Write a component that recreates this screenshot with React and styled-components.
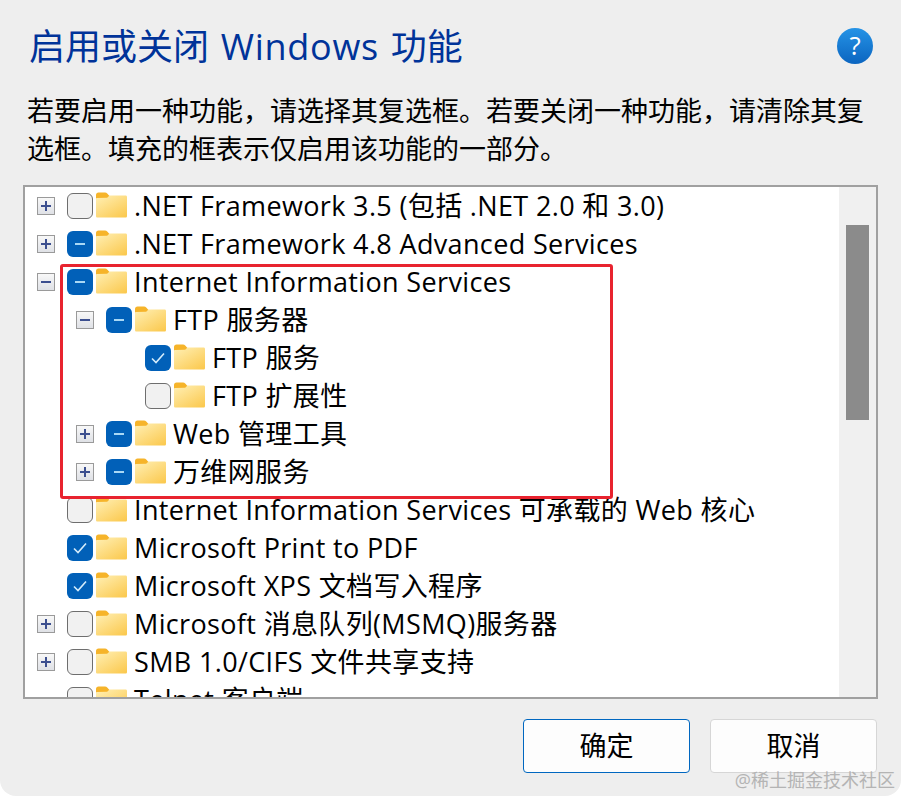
import React from "react";
import styled, { createGlobalStyle } from "styled-components";

const FONT = `"Open Sans", "Noto Sans CJK SC", sans-serif`;

const GlobalStyle = createGlobalStyle`
  html, body {
    margin: 0;
    padding: 0;
    background: #fff;
  }
  * {
    box-sizing: border-box;
  }
`;

const Dialog = styled.div`
  position: relative;
  width: 901px;
  height: 796px;
  background: #eeeeee;
  border-radius: 0 0 16px 16px;
  overflow: hidden;
  font-family: ${FONT};
  color: #000;
  padding: 0 23px 0 23px;
  display: flex;
  flex-direction: column;
`;

const Header = styled.div`
  height: 92px;
  display: flex;
  align-items: center;
  justify-content: space-between;
  padding: 0 5px 0 6px;
`;

const Title = styled.h1`
  margin: 2px 0 0 0;
  font-size: 36px;
  font-weight: 400;
  line-height: 48px;
  color: #003399;
  word-spacing: 2.5px;
`;

const TitleLatin = styled.span`
  letter-spacing: 0.7px;
`;

const HelpButton = styled.div`
  width: 36px;
  height: 36px;
  border-radius: 50%;
  background: linear-gradient(180deg, #2593e6, #0b65c0);
  color: #fff;
  font-size: 26px;
  line-height: 35px;
  text-align: center;
`;

const Description = styled.p`
  margin: 0 0 17px 0;
  padding-left: 4px;
  font-size: 27px;
  line-height: 38px;
  height: 76px;
  white-space: nowrap;
`;

const ListBox = styled.div`
  height: 514px;
  width: 855px;
  border: 2px solid #a0a0a0;
  background: #fff;
  display: flex;
  overflow: hidden;
`;

const Rows = styled.div`
  flex: 1;
  overflow: hidden;
`;

const Row = styled.div`
  height: 38px;
  display: flex;
  align-items: center;
  padding-left: ${(p) => 12 + p.$level * 39}px;
  font-size: 27px;
  letter-spacing: 0.35px;
  white-space: nowrap;
`;

const ExpanderSlot = styled.div`
  width: 30px;
  flex-shrink: 0;
`;

const Expander = styled.div`
  position: relative;
  width: 18px;
  height: 18px;
  border: 1px solid #9a9a9a;
  background: linear-gradient(180deg, #f8f8f8, #dfe1e6);
  &::before {
    content: "";
    position: absolute;
    left: 3px;
    top: 7px;
    width: 10px;
    height: 2px;
    background: #3c4f8f;
  }
  &::after {
    content: "";
    display: ${(p) => (p.$open ? "none" : "block")};
    position: absolute;
    left: 7px;
    top: 3px;
    width: 2px;
    height: 10px;
    background: #3c4f8f;
  }
`;

const Check = styled.div`
  width: 26px;
  height: 26px;
  flex-shrink: 0;
  border-radius: 6px;
  display: flex;
  align-items: center;
  justify-content: center;
  background: ${(p) => (p.$state === "off" ? "#f1f1f1" : "#0160b8")};
  border: ${(p) => (p.$state === "off" ? "1px solid #6e6e6e" : "none")};
`;

const Dash = styled.div`
  width: 10px;
  height: 2px;
  background: #a9d8f5;
`;

const Label = styled.span`
  margin-left: 6px;
  line-height: 38px;
`;

const Scrollbar = styled.div`
  width: 37px;
  background: #f0f0f0;
  padding: 38px 7px 0 7px;
  flex-shrink: 0;
`;

const Thumb = styled.div`
  height: 195px;
  background: #8b8b8b;
`;

const Footer = styled.div`
  flex: 1;
  display: flex;
  justify-content: flex-end;
  gap: 20px;
  padding: 20px 1px 0 0;
`;

const Button = styled.div`
  width: 167px;
  height: 54px;
  border-radius: 4px;
  background: #fdfdfd;
  border: 1px solid ${(p) => (p.$primary ? "#0067c0" : "#d6d6d6")};
  font-size: 27px;
  line-height: 52px;
  text-align: center;
`;

const Highlight = styled.div`
  position: absolute;
  left: 60px;
  top: 264px;
  width: 553px;
  height: 235px;
  border: 3px solid #e8232f;
  border-radius: 3px;
  pointer-events: none;
`;

const Watermark = styled.div`
  position: absolute;
  right: 6px;
  bottom: 5px;
  font-size: 18px;
  line-height: 22px;
  color: #b4b4b4;
`;

const FolderSvg = styled.svg`
  width: 33px;
  height: 26px;
  flex-shrink: 0;
  margin: -3px 0 0 2px;
`;

function Folder({ id }) {
  return (
    <FolderSvg viewBox="0 0 33 26">
      <defs>
        <linearGradient id={id} x1="0.1" y1="0" x2="0.9" y2="1">
          <stop offset="0" stopColor="#ffeeb0" />
          <stop offset="1" stopColor="#fbc94f" />
        </linearGradient>
      </defs>
      <path d="M1 3C1 1.6 2 .6 3.5 .6H10c1 0 1.6.4 2.2 1L14.5 4v4H1z" fill="#f6b42a" />
      <path d="M1 7c0-.6.4-1 1-1l10.2-.2L14.5 3.5H30.5c1 0 1.5.6 1.5 1.5v19c0 1-.6 1.5-1.5 1.5H2.5C1.6 25.5 1 25 1 24z" fill={`url(#${id})`} />
    </FolderSvg>
  );
}

function CheckBox({ state }) {
  return (
    <Check $state={state}>
      {state === "mixed" && <Dash />}
      {state === "on" && (
        <svg width="16" height="14" viewBox="0 0 16 14" fill="none">
          <path d="M2 7.5L6 11.5L14 2.5" stroke="#d4ecfb" strokeWidth="1.6" />
        </svg>
      )}
    </Check>
  );
}

const rows = [
  { level: 0, exp: "closed", state: "off", text: ".NET Framework 3.5 (包括 .NET 2.0 和 3.0)" },
  { level: 0, exp: "closed", state: "mixed", text: ".NET Framework 4.8 Advanced Services" },
  { level: 0, exp: "open", state: "mixed", text: "Internet Information Services" },
  { level: 1, exp: "open", state: "mixed", text: "FTP 服务器" },
  { level: 2, state: "on", text: "FTP 服务" },
  { level: 2, state: "off", text: "FTP 扩展性" },
  { level: 1, exp: "closed", state: "mixed", text: "Web 管理工具" },
  { level: 1, exp: "closed", state: "mixed", text: "万维网服务" },
  { level: 0, state: "off", text: "Internet Information Services 可承载的 Web 核心" },
  { level: 0, state: "on", text: "Microsoft Print to PDF" },
  { level: 0, state: "on", text: "Microsoft XPS 文档写入程序" },
  { level: 0, exp: "closed", state: "off", text: "Microsoft 消息队列(MSMQ)服务器" },
  { level: 0, exp: "closed", state: "off", text: "SMB 1.0/CIFS 文件共享支持" },
  { level: 0, state: "off", text: "Telnet 客户端" },
];

function App() {
  return (
    <Dialog>
      <GlobalStyle />
      <Header>
        <Title>
          启用或关闭 <TitleLatin>Windows</TitleLatin> 功能
        </Title>
        <HelpButton>?</HelpButton>
      </Header>
      <Description>
        若要启用一种功能，请选择其复选框。若要关闭一种功能，请清除其复
        <br />
        选框。填充的框表示仅启用该功能的一部分。
      </Description>
      <ListBox>
        <Rows>
          {rows.map((r, i) => (
            <Row key={i} $level={r.level}>
              <ExpanderSlot>{r.exp && <Expander $open={r.exp === "open"} />}</ExpanderSlot>
              <CheckBox state={r.state} />
              <Folder id={`folder-${i}`} />
              <Label>{r.text}</Label>
            </Row>
          ))}
        </Rows>
        <Scrollbar>
          <Thumb />
        </Scrollbar>
      </ListBox>
      <Footer>
        <Button $primary>确定</Button>
        <Button>取消</Button>
      </Footer>
      <Highlight />
      <Watermark>@稀土掘金技术社区</Watermark>
    </Dialog>
  );
}

export default App;
